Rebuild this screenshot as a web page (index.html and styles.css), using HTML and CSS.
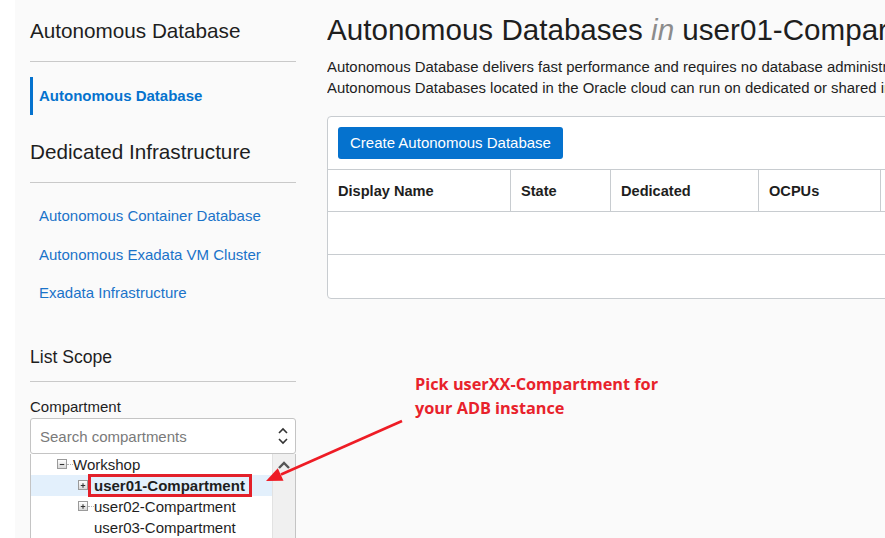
FILE: index.html
```html
<!DOCTYPE html>
<html lang="en">
<head>
<meta charset="utf-8">
<title>Autonomous Databases</title>
<link rel="stylesheet" href="styles.css">
</head>
<body>
<div class="page">
  <div class="strip"></div>
  <aside class="sidebar">
    <h2 class="side-h">Autonomous Database</h2>
    <a class="nav-active">Autonomous Database</a>
    <h2 class="side-h side-h2">Dedicated Infrastructure</h2>
    <ul class="links">
      <li>Autonomous Container Database</li>
      <li>Autonomous Exadata VM Cluster</li>
      <li>Exadata Infrastructure</li>
    </ul>
    <h3 class="scope-h">List Scope</h3>
    <label class="field-label">Compartment</label>
    <div class="select">
      <span class="placeholder">Search compartments</span>
      <svg class="updown" width="12" height="20" viewBox="0 0 12 20"><path d="M2 7 L6 3 L10 7 M2 13 L6 17 L10 13" fill="none" stroke="#333" stroke-width="1.6"/></svg>
    </div>
    <div class="tree">
      <div class="tree-list">
        <div class="row row-l1"><span class="tbox"><svg width="9" height="9" viewBox="0 0 9 9"><path d="M2 4.5 H7" stroke="#333" stroke-width="1.2"/></svg></span><span class="conn"></span><span>Workshop</span></div>
        <div class="row row-l2 row-sel"><span class="tbox"><svg width="9" height="9" viewBox="0 0 9 9"><path d="M2 4.5 H7 M4.5 2 V7" stroke="#333" stroke-width="1.2"/></svg></span><span class="picked">user01-Compartment</span></div>
        <div class="row row-l2"><span class="tbox"><svg width="9" height="9" viewBox="0 0 9 9"><path d="M2 4.5 H7 M4.5 2 V7" stroke="#333" stroke-width="1.2"/></svg></span><span class="conn"></span><span>user02-Compartment</span></div>
        <div class="row row-l3"><span>user03-Compartment</span></div>
      </div>
      <div class="scrollbar">
        <svg class="scroll-up" width="14" height="10" viewBox="0 0 14 10"><path d="M2 8 L7 3 L12 8" fill="none" stroke="#555" stroke-width="2.4"/></svg>
      </div>
    </div>
  </aside>
  <main class="main">
    <h1 class="title">Autonomous Databases <em>in</em> user01-Compartment</h1>
    <p class="desc">Autonomous Database delivers fast performance and requires no database administration. Oracle<br>Autonomous Databases located in the Oracle cloud can run on dedicated or shared infrastructure.</p>
    <div class="panel">
      <div class="toolbar"><button class="btn">Create Autonomous Database</button></div>
      <div class="grid grid-head">
        <div class="cell">Display Name</div>
        <div class="cell">State</div>
        <div class="cell">Dedicated</div>
        <div class="cell">OCPUs</div>
        <div class="cell">Storage (TB)</div>
      </div>
      <div class="grid grid-row"><div class="cell"></div></div>
      <div class="grid grid-row grid-last"><div class="cell"></div></div>
    </div>
  </main>
  <div class="note">Pick userXX-Compartment for<br>your ADB instance</div>
  <svg class="arrow" width="885" height="538" viewBox="0 0 885 538">
    <line x1="402" y1="421" x2="281" y2="474.5" stroke="#ee1c25" stroke-width="2.6"/>
    <polygon points="266,481 283.5,480.8 277.8,468.2" fill="#ee1c25"/>
  </svg>
</div>
</body>
</html>
```

FILE: styles.css
```css
html, body {
  margin: 0;
  padding: 0;
  background: #fafafa;
}
body {
  font-family: "Liberation Sans", Arial, sans-serif;
  color: #1f1f1f;
  width: 885px;
  height: 538px;
  overflow: hidden;
}
.page {
  position: relative;
  display: flex;
  width: 885px;
  height: 538px;
  overflow: hidden;
}
.strip {
  flex: 0 0 15px;
  background: #ffffff;
}
.sidebar {
  flex: 0 0 266px;
  padding-left: 15px;
  display: flex;
  flex-direction: column;
}
.sidebar > * {
  flex-shrink: 0;
}
.side-h {
  margin: 18px 0 0;
  font-size: 20.7px;
  line-height: 26px;
  font-weight: normal;
  color: #1e1e1e;
  padding-bottom: 17px;
  border-bottom: 1px solid #c9c9c9;
}
.side-h2 {
  margin-top: 24px;
}
.nav-active {
  display: block;
  margin-top: 15px;
  height: 38px;
  line-height: 38px;
  border-left: 3px solid #0572ce;
  padding-left: 6px;
  font-size: 15px;
  font-weight: bold;
  color: #0572ce;
}
.links {
  list-style: none;
  margin: 14px 0 0;
  padding: 0 0 0 9px;
}
.links li {
  height: 38.5px;
  line-height: 38.5px;
  font-size: 15px;
  color: #1a73c9;
}
.scope-h {
  margin: 33.5px 0 0;
  font-size: 17.6px;
  line-height: 22px;
  font-weight: normal;
  color: #1e1e1e;
  padding-bottom: 13px;
  border-bottom: 1px solid #c9c9c9;
}
.field-label {
  display: block;
  margin-top: 16px;
  font-size: 15px;
  line-height: 18px;
  color: #1e1e1e;
}
.select {
  margin-top: 1.5px;
  height: 36px;
  box-sizing: border-box;
  border: 1px solid #c4c4c4;
  border-radius: 3px;
  background: #ffffff;
  display: flex;
  align-items: center;
  justify-content: space-between;
  padding: 2px 6px 0 9px;
}
.placeholder {
  font-size: 15px;
  color: #7a7a7a;
}
.updown {
  display: block;
  margin-top: -2px;
}
.tree {
  height: 100px;
  box-sizing: border-box;
  border: 1px solid #c4c4c4;
  border-top: none;
  background: #ffffff;
  display: flex;
}
.tree-list {
  flex: 1;
}
.row {
  height: 21px;
  display: flex;
  align-items: center;
  font-size: 15px;
  color: #1e1e1e;
  white-space: nowrap;
}
.row-l1 {
  padding-left: 26px;
}
.row-l2 {
  padding-left: 47px;
}
.row-l3 {
  padding-left: 63px;
}
.row-sel {
  background: #e3f0fc;
}
.conn {
  width: 6px;
  border-top: 1px dotted #b5b5b5;
}
.tbox {
  width: 10px;
  height: 10px;
  box-sizing: border-box;
  border: 1px solid #9a9a9a;
  background: linear-gradient(#ffffff, #d8d8d8);
  display: flex;
  align-items: center;
  justify-content: center;
}
.tbox svg {
  display: block;
}
.picked {
  font-weight: bold;
  border: 3px solid #e3202a;
  padding: 0 4px 0 3px;
  line-height: 17px;
}
.scrollbar {
  flex: 0 0 22px;
  background: #f0f0f0;
  border-left: 1px solid #e2e2e2;
  display: flex;
  justify-content: center;
}
.scroll-up {
  display: block;
  margin-top: 6px;
}
.main {
  flex: 1;
  min-width: 0;
  margin-left: 31px;
  overflow: hidden;
}
.title {
  margin: 13px 0 0;
  font-size: 29.6px;
  line-height: 34px;
  font-weight: normal;
  color: #1e1e1e;
  white-space: nowrap;
}
.title em {
  color: #8c8c8c;
}
.desc {
  margin: 10px 0 0;
  font-size: 14.9px;
  line-height: 21px;
  color: #1e1e1e;
  white-space: nowrap;
}
.panel {
  margin-top: 17px;
  width: 700px;
  border: 1px solid #c8ccd0;
  border-radius: 4px;
  background: #ffffff;
}
.toolbar {
  padding: 10px 10px 10px 10px;
}
.btn {
  display: block;
  height: 32px;
  padding: 0 12px 1px;
  border: none;
  border-radius: 3px;
  background: #0572ce;
  color: #ffffff;
  font-family: "Liberation Sans", Arial, sans-serif;
  font-size: 15px;
}
.grid {
  display: grid;
  grid-template-columns: 183px 100px 148px 122px 1fr;
}
.grid-head {
  border-top: 1px solid #c8ccd0;
  border-bottom: 1px solid #c8ccd0;
  height: 43px;
  box-sizing: border-box;
}
.grid-head .cell {
  border-right: 1px solid #c8ccd0;
  padding-left: 10px;
  display: flex;
  align-items: center;
  font-size: 14.6px;
  font-weight: bold;
  color: #1e1e1e;
  white-space: nowrap;
}
.grid-row {
  height: 43px;
  box-sizing: border-box;
  border-bottom: 1px solid #c8ccd0;
}
.grid-last {
  border-bottom: none;
  height: 43px;
}
.note {
  position: absolute;
  left: 415px;
  top: 372px;
  font-family: "Open Sans", sans-serif;
  font-weight: bold;
  font-size: 16.3px;
  line-height: 24px;
  color: #e8222b;
}
.arrow {
  position: absolute;
  left: 0;
  top: 0;
  pointer-events: none;
}
```
